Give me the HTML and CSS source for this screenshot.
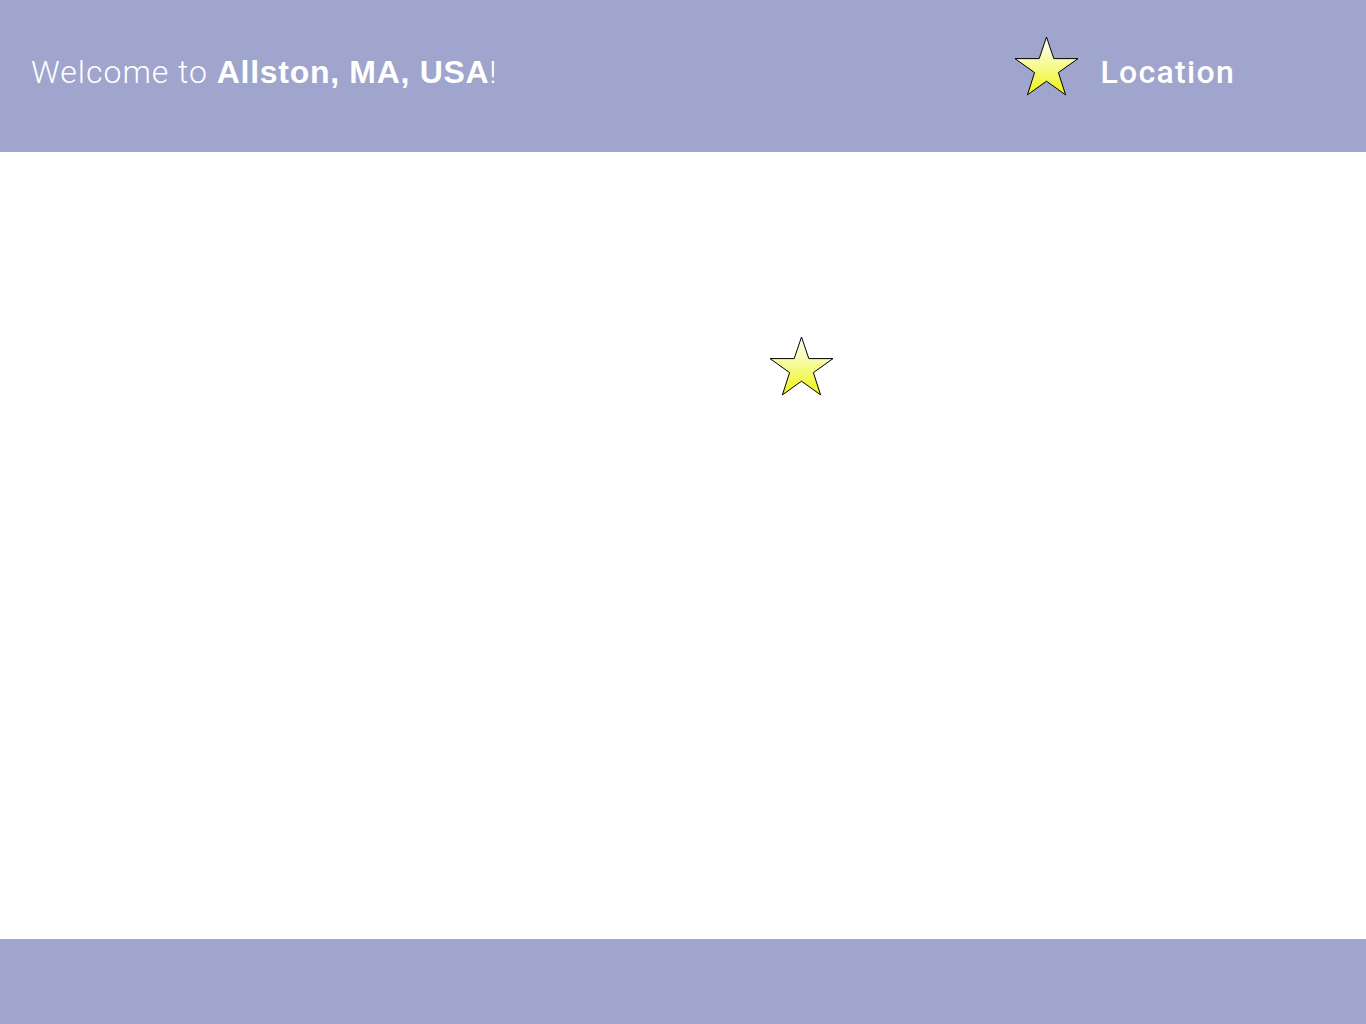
FILE: index.html
```html
<!DOCTYPE html>
<html lang="en">
<head>
<meta charset="utf-8">
<title>Allston, MA, USA</title>
<link rel="stylesheet" href="styles.css">
</head>
<body>
<div class="app">
  <header class="topbar">
    <h1 class="welcome">Welcome to <strong>Allston, MA, USA</strong>!</h1>
    <div class="location">
      <svg class="star" viewBox="0 0 65 60" width="65" height="60" aria-hidden="true">
        <defs>
          <linearGradient id="g1" x1="0" y1="0" x2="0" y2="1">
            <stop offset="0" stop-color="#ffffff"/>
            <stop offset="0.45" stop-color="#f7fb9c"/>
            <stop offset="1" stop-color="#eef50c"/>
          </linearGradient>
        </defs>
        <polygon points="32.5,1 39.8,22.6 64,22.6 44.4,36.6 51.6,58.9 32.5,45.2 13.4,58.9 20.6,36.6 1,22.6 25.2,22.6" fill="url(#g1)" stroke="#000" stroke-width="1"/>
      </svg>
      <span class="loc-label">Location</span>
    </div>
  </header>
  <main class="map">
    <svg class="pin" viewBox="0 0 65 60" width="65" height="60" aria-hidden="true">
      <defs>
        <linearGradient id="g2" x1="0" y1="0" x2="0" y2="1">
          <stop offset="0" stop-color="#ffffff"/>
          <stop offset="0.45" stop-color="#f7fb9c"/>
          <stop offset="1" stop-color="#eef50c"/>
        </linearGradient>
      </defs>
      <polygon points="32.5,1 39.8,22.6 64,22.6 44.4,36.6 51.6,58.9 32.5,45.2 13.4,58.9 20.6,36.6 1,22.6 25.2,22.6" fill="url(#g2)" stroke="#000" stroke-width="1"/>
    </svg>
  </main>
  <footer class="bottombar"></footer>
</div>
</body>
</html>
```

FILE: styles.css
```css
html, body {
  margin: 0;
  padding: 0;
  height: 100%;
}
body {
  font-family: "Liberation Sans", Arial, sans-serif;
  background: #ffffff;
}
.app {
  display: flex;
  flex-direction: column;
  height: 100vh;
}
.topbar {
  height: 152px;
  flex: 0 0 152px;
  background: #a0a5cd;
  display: flex;
  align-items: center;
  justify-content: space-between;
  padding: 0 131px 8px 31px;
  box-sizing: border-box;
  color: #ffffff;
}
.welcome {
  margin: 0;
  font-family: Roboto, "Liberation Sans", sans-serif;
  font-size: 32px;
  font-weight: 300;
  letter-spacing: 1px;
}
.welcome strong {
  font-family: "Liberation Sans", Arial, sans-serif;
  font-weight: 700;
  font-size: 32px;
  letter-spacing: 0.7px;
}
.location {
  display: flex;
  align-items: center;
  gap: 21px;
}
.star {
  display: block;
  margin-top: -12px;
}
.loc-label {
  font-family: Roboto, "Liberation Sans", sans-serif;
  font-size: 32px;
  font-weight: 500;
  letter-spacing: 1.3px;
}
.map {
  flex: 1 1 auto;
  position: relative;
  background: #ffffff;
}
.pin {
  position: absolute;
  left: 769px;
  top: 184px;
  display: block;
}
.bottombar {
  height: 85px;
  flex: 0 0 85px;
  background: #a0a5cd;
}
```
